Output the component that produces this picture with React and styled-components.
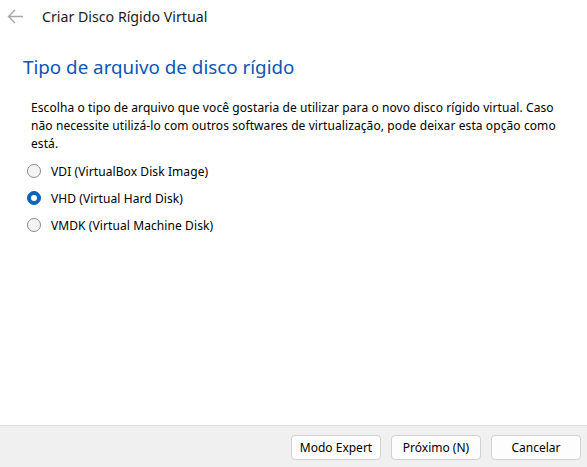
import * as React from 'react';
import styled, { createGlobalStyle } from 'styled-components';

const GlobalStyle = createGlobalStyle`
    html, body {
        margin: 0;
        padding: 0;
        background: #fff;
    }
    body {
        font-family: "Noto Sans", "Open Sans", sans-serif;
        color: #000;
    }
`;

const Window = styled.div`
    width: 587px;
    height: 467px;
    display: flex;
    flex-direction: column;
    background: #fff;
    overflow: hidden;
`;

const TitleBar = styled.div`
    display: flex;
    align-items: center;
    height: 32px;
    padding-left: 7px;
    gap: 18px;
`;

const BackButton = styled.span`
    display: flex;
    width: 17px;
    height: 17px;
    color: #a6a6a6;
`;

const WindowTitle = styled.span`
    font-size: 14.2px;
    color: #1a1a1a;
`;

const Content = styled.div`
    flex: 1;
    display: flex;
    flex-direction: column;
    padding: 23px 30px 0 31px;
`;

const Heading = styled.h1`
    margin: 0 0 0 -8px;
    font-size: 18.8px;
    font-weight: 400;
    color: #0c55b4;
    line-height: 24px;
`;

const Description = styled.p`
    margin: 20px 0 0;
    font-size: 12px;
    letter-spacing: 0.09px;
    line-height: 18px;
`;

const Options = styled.div`
    display: flex;
    flex-direction: column;
    gap: 9px;
    margin-top: 9px;
    margin-left: -4px;
`;

const Option = styled.label`
    display: flex;
    align-items: center;
    gap: 10px;
    height: 18px;
    font-size: 12px;
    letter-spacing: 0.09px;
`;

const Radio = styled.span`
    box-sizing: border-box;
    width: 14px;
    height: 14px;
    border-radius: 50%;
    flex-shrink: 0;
    background: ${(p) => (p.checked ? '#0a63be' : '#f4f4f4')};
    border: 1px solid ${(p) => (p.checked ? '#0a63be' : '#8c8c8c')};
    display: flex;
    align-items: center;
    justify-content: center;
    &::after {
        content: '';
        display: ${(p) => (p.checked ? 'block' : 'none')};
        width: 6px;
        height: 6px;
        border-radius: 50%;
        background: #fff;
    }
`;

const Footer = styled.div`
    height: 42px;
    box-sizing: border-box;
    border-top: 1px solid #dcdcdc;
    background: #f0f0f0;
    display: flex;
    justify-content: flex-end;
    align-items: flex-start;
    gap: 10px;
    padding: 9px 6px 0 0;
`;

const Button = styled.button`
    box-sizing: border-box;
    width: 90px;
    height: 25px;
    border: 1px solid #d0d0d0;
    border-radius: 4px;
    background: #fdfdfd;
    font-family: inherit;
    font-size: 12px;
    color: #000;
    padding: 0;
`;

const options = [
    { label: 'VDI (VirtualBox Disk Image)' },
    { label: 'VHD (Virtual Hard Disk)', checked: true },
    { label: 'VMDK (Virtual Machine Disk)' },
];

const App = () => (
    <Window>
        <GlobalStyle />
        <TitleBar>
            <BackButton>
                <svg width="17" height="17" viewBox="0 0 17 17" fill="none" stroke="currentColor" strokeWidth="1.4">
                    <path d="M1.5 8.5H16M8 2L1.5 8.5L8 15" />
                </svg>
            </BackButton>
            <WindowTitle>Criar Disco Rígido Virtual</WindowTitle>
        </TitleBar>
        <Content>
            <Heading>Tipo de arquivo de disco rígido</Heading>
            <Description>
                Escolha o tipo de arquivo que você gostaria de utilizar para o novo disco rígido virtual. Caso
                não necessite utilizá-lo com outros softwares de virtualização, pode deixar esta opção como
                está.
            </Description>
            <Options>
                {options.map((o) => (
                    <Option key={o.label}>
                        <Radio checked={o.checked} />
                        {o.label}
                    </Option>
                ))}
            </Options>
        </Content>
        <Footer>
            <Button>Modo Expert</Button>
            <Button>Próximo (N)</Button>
            <Button>Cancelar</Button>
        </Footer>
    </Window>
);

export default App;
